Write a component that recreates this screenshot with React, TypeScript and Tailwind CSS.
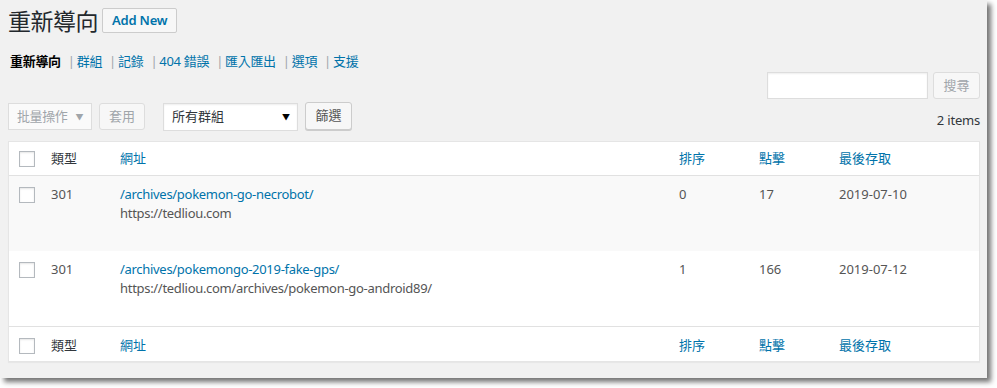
const NAV = ['群組', '記錄', '404 錯誤', '匯入匯出', '選項', '支援']

const ROWS = [
  { code: '301', source: '/archives/pokemon-go-necrobot/', target: 'https://tedliou.com', position: '0', hits: '17', last: '2019-07-10', alt: true },
  { code: '301', source: '/archives/pokemongo-2019-fake-gps/', target: 'https://tedliou.com/archives/pokemon-go-android89/', position: '1', hits: '166', last: '2019-07-12', alt: false },
]

const COLS = 'grid grid-cols-[42px_69px_559px_80px_80px_1fr]'

function Checkbox() {
  return (
    <span className="ml-[10px] block w-4 h-4 bg-white border border-[#b4b9be] shadow-[inset_0_1px_2px_rgba(0,0,0,0.1)]" />
  )
}

function HeadRow({ top }: { top?: boolean }) {
  return (
    <div className={`${COLS} items-center ${top ? 'h-[34px] border-b' : 'h-[35px] pt-[3px] border-t'} border-[#e1e1e1]`}>
      <Checkbox />
      <span className="text-[#32373c]">類型</span>
      <span className="text-[#0073aa]">網址</span>
      <span className="text-[#0073aa]">排序</span>
      <span className="text-[#0073aa]">點擊</span>
      <span className="text-[#0073aa]">最後存取</span>
    </div>
  )
}

export default function App() {
  return (
    <div className="w-[997px] h-[388px] bg-white font-['Segoe_UI','Noto_Sans','Noto_Sans_CJK_TC',sans-serif] text-[13px]">
      <div className="w-[987px] h-[378px] bg-[#f1f1f1] shadow-[4px_4px_5px_rgba(0,0,0,0.55)] pl-2 pr-[7px] pt-2">
        <div className="flex items-center h-[25px] gap-1">
          <h1 className="text-[23px] leading-[25px] text-[#23282d] font-['Noto_Sans_CJK_TC',sans-serif] tracking-[-0.5px]">重新導向</h1>
          <button className="h-[25px] px-[9px] bg-[#f7f7f7] border border-[#ccc] rounded-[2px] text-[#0073aa] font-semibold text-[13px] leading-[23px] tracking-[-0.2px]">
            Add New
          </button>
        </div>

        <div className="mt-[19px] ml-[2px] h-[18px] flex items-center leading-[18px] tracking-[-0.3px]">
          <span className="font-bold text-black">重新導向</span>
          {NAV.map(n => (
            <span key={n} className="flex items-center">
              <span className="ml-[7px] mr-[2px] text-[#a0a5aa]">|</span>
              <span className="text-[#0073aa]">{n}</span>
            </span>
          ))}
        </div>

        <div className="mt-[2px] flex justify-end gap-[5px] h-[27px]">
          <div className="w-[161px] h-[27px] bg-white border border-[#ddd] shadow-[inset_0_1px_2px_rgba(0,0,0,0.07)]" />
          <button className="w-[47px] h-[27px] bg-[#f7f7f7] border border-[#ddd] rounded-[3px] text-[#a0a5aa]">搜尋</button>
        </div>

        <div className="mt-1 flex items-start h-[28px]">
          <div className="w-[84px] h-[27px] flex items-center justify-between pl-2 pr-2 bg-[#fafafa] border border-[#ddd] text-[#a0a5aa] tracking-[-0.4px]">
            <span>批量操作</span>
            <span className="text-[8px]">▼</span>
          </div>
          <button className="ml-[7px] w-[46px] h-[27px] bg-[#f7f7f7] border border-[#ddd] rounded-[3px] text-[#a0a5aa]">套用</button>
          <div className="ml-[18px] w-[135px] h-[28px] flex items-center justify-between pl-[8px] pr-[7px] bg-white border border-[#ddd] text-[#32373c] shadow-[inset_0_1px_2px_rgba(0,0,0,0.07)]">
            <span>所有群組</span>
            <span className="text-[8px] text-black">▼</span>
          </div>
          <button className="ml-[7px] -mt-px w-[47px] h-[28px] bg-[#f7f7f7] border border-[#ccc] rounded-[3px] text-[#555] shadow-[0_1px_0_#ccc]">篩選</button>
          <span className="ml-auto pt-[8px] leading-[19px] text-[#32373c] tracking-[-0.2px]">2 items</span>
        </div>

        <div className="mt-[10px] bg-white border border-[#e5e5e5] shadow-[0_1px_1px_rgba(0,0,0,0.04)]">
          <HeadRow top />
          {ROWS.map(r => (
            <div key={r.source} className={`${COLS} h-[75px] leading-[19px] pt-[9px] text-[#555] ${r.alt ? 'bg-[#f9f9f9]' : 'bg-white'}`}>
              <div className="pt-[2px]"><Checkbox /></div>
              <span>{r.code}</span>
              <div className="flex flex-col tracking-[-0.3px]">
                <span className="text-[#0073aa]">{r.source}</span>
                <span>{r.target}</span>
              </div>
              <span>{r.position}</span>
              <span>{r.hits}</span>
              <span>{r.last}</span>
            </div>
          ))}
          <HeadRow />
        </div>
      </div>
    </div>
  )
}
